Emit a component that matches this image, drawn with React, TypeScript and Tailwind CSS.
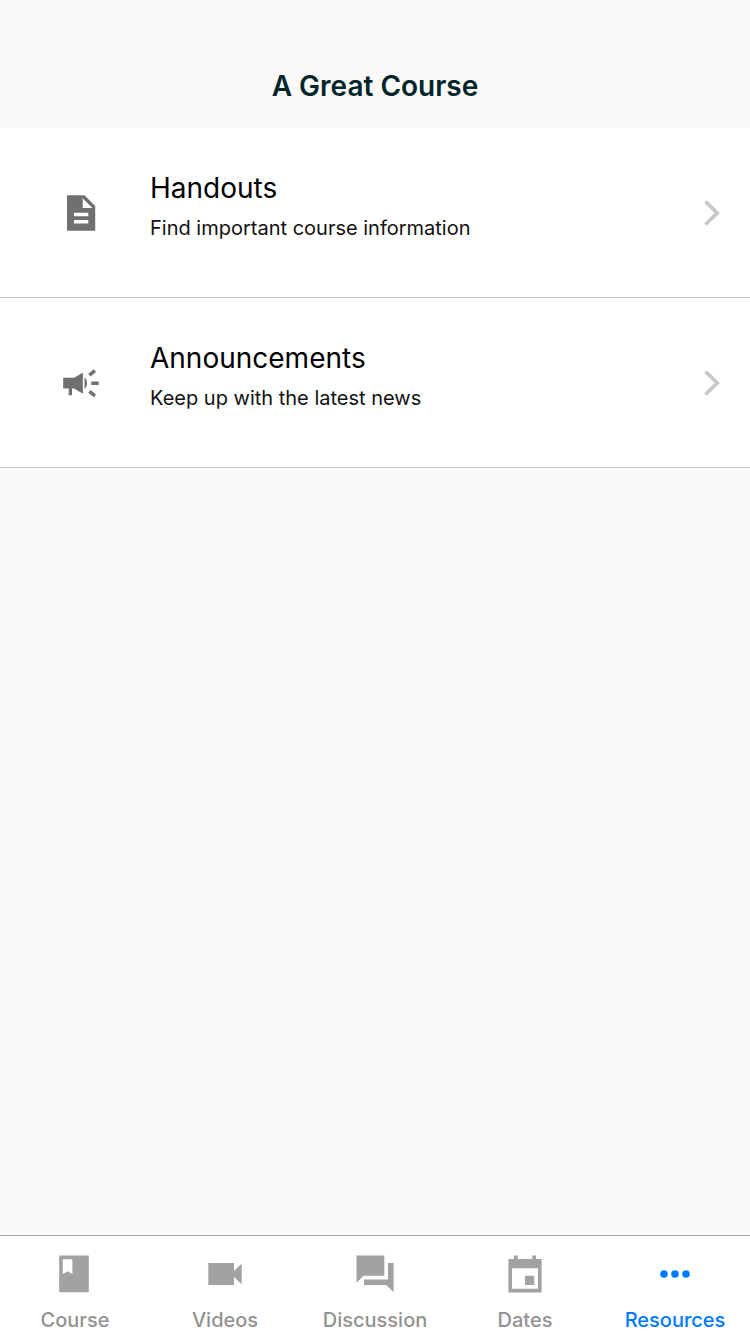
import React from "react";

type RowProps = { title: string; detail: string; icon: React.ReactNode };

function Chevron() {
  return (
    <svg viewBox="0 0 18 28" className="h-7 w-[18px] shrink-0" fill="none" stroke="#c7c7cc" strokeWidth="3.8" aria-hidden="true">
      <path d="M1.500 2.500 13.200 14 1.500 25.500" />
    </svg>
  );
}

function Row({ title, detail, icon }: RowProps) {
  return (
    <li className="border-b border-[#c8c7cc] bg-white">
      <a href="#" className="flex h-[169px] items-center pr-7 pl-[60px]">
        <span className="flex w-[90px] shrink-0">{icon}</span>
        <span className="flex grow flex-col pb-2.5">
          <span className="text-[28px] leading-10 text-black">{title}</span>
          <span className="text-xl leading-10 text-[#111111]">{detail}</span>
        </span>
        <Chevron />
      </a>
    </li>
  );
}

type TabProps = { label: string; active?: boolean; children: React.ReactNode };

function Tab({ label, active = false, children }: TabProps) {
  return (
    <button
      type="button"
      aria-current={active ? "page" : undefined}
      className={`flex min-w-0 flex-col items-center pt-4 text-xl font-medium ${active ? "text-[#007aff]" : "text-[#929292]"}`}
    >
      <svg viewBox="0 0 44 44" className={`size-11 ${active ? "text-[#007aff]" : "text-[#a2a2a2]"}`} fill="currentColor" aria-hidden="true">
        {children}
      </svg>
      <span className="pt-2.5 leading-7">{label}</span>
    </button>
  );
}

export default function App() {
  return (
    <div className="flex min-h-screen flex-col bg-[#fbfaf8] font-['Inter',sans-serif]">
      <header className="flex h-32 items-end justify-center pb-[22px]">
        <h1 className="text-[28px] leading-10 font-semibold text-[#00262b]">A Great Course</h1>
      </header>
      <main className="grow">
        <ul>
          <Row
            title="Handouts"
            detail="Find important course information"
            icon={
              <svg viewBox="0 0 42 42" className="size-[42px]" fill="#707070" aria-hidden="true">
                <path fillRule="evenodd" d="M7 3.300h17.500L35.200 14v24.800H7zM22.700 6.300V16h9.700zM14 20.700v3.600h14.300v-3.600zm0 7.300v3.600h14.300V28z" />
              </svg>
            }
          />
          <Row
            title="Announcements"
            detail="Keep up with the latest news"
            icon={
              <svg viewBox="0 0 42 42" className="size-[42px]" fill="#707070" aria-hidden="true">
                <path d="M3.200 15.700h11l8.700-5.300v21.400l-8.700-5.300H12v6.800H8.700v-6.800H3.200zM24.500 15.200c3.500 3 3.500 8.800 0 11.800z" />
                <path d="M31.300 19.400h7.400v3.600h-7.400zM28.300 11.700l5.600-4.500 2.100 2.700-5.600 4.500zM30.400 28l5.600 4.500-2.100 2.700-5.600-4.500z" />
              </svg>
            }
          />
        </ul>
      </main>
      <nav aria-label="Course" className="grid h-[99px] grid-cols-5 border-t border-[#a7a7aa] bg-white">
        <Tab label="Course">
          <path fillRule="evenodd" d="M6.200 3.500h29.600v36.800H6.200zM9.800 7.200v15l4.800-3 4.800 3v-15z" />
        </Tab>
        <Tab label="Videos">
          <path d="M5.300 11H31v8l7.700-7.300v20.600L31 25v8H5.300z" />
        </Tab>
        <Tab label="Discussion">
          <path d="M3.500 3.500h27.800v20.200H10.700l-7.200 7zM35 11h5.600v29.200L33.300 33H11v-5.600h24z" />
        </Tab>
        <Tab label="Dates">
          <path fillRule="evenodd" d="M5.400 6.900H11V3.500h3.700v3.400h14.600V3.500H33v3.400h5.600v33.500H5.400zM9 16.200v20.500h26V16.200zM22 23.700h9.200V33H22z" />
        </Tab>
        <Tab label="Resources" active>
          <circle cx="11" cy="22" r="3.800" />
          <circle cx="22" cy="22" r="3.800" />
          <circle cx="33" cy="22" r="3.800" />
        </Tab>
      </nav>
    </div>
  );
}
